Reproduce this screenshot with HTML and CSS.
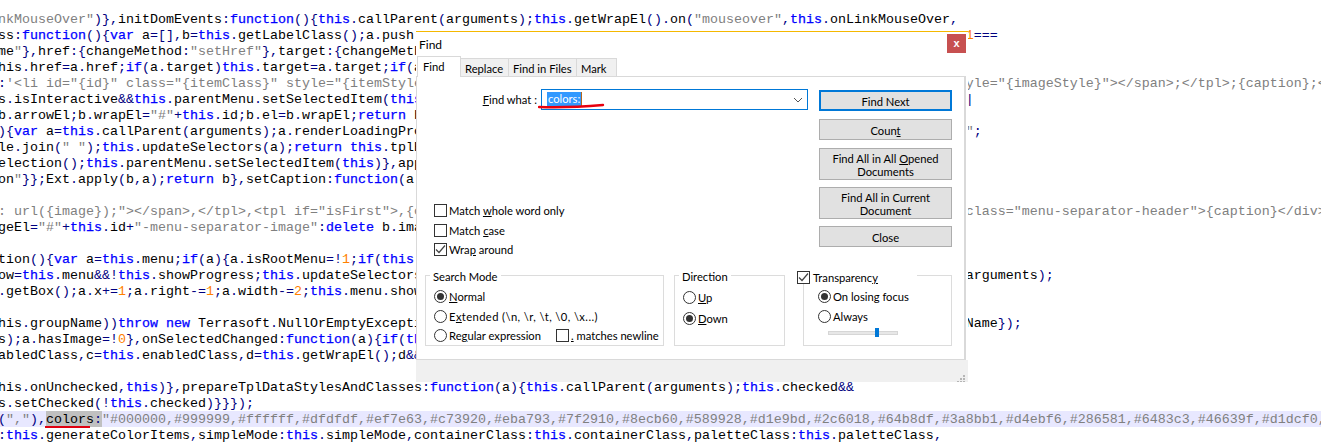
FILE: index.html
```html
<!DOCTYPE html>
<html>
<head>
	<title>Find</title>
	<link rel="stylesheet" href="styles.css">
</head>
<body>

<!-- editor behind the dialog -->
<div class="code">
<div class="line"><i class="s">nkMouseOver"</i><b class="o">)},</b>initDomEvents<b class="o">:</b><b class="k">function</b><b class="o">(){</b><b class="k">this</b><b class="o">.</b>callParent<b class="o">(</b>arguments<b class="o">);</b><b class="k">this</b><b class="o">.</b>getWrapEl<b class="o">().</b>on<b class="o">(</b><i class="s">"mouseover"</i><b class="o">,</b><b class="k">this</b><b class="o">.</b>onLinkMouseOver<b class="o">,</b></div>
<div class="line"><span class="cut">ss<b class="o">:</b><b class="k">function</b><b class="o">(){</b><b class="k">var</b> a<b class="o">=[],</b>b<b class="o">=</b><b class="k">this</b><b class="o">.</b>getLabelClass<b class="o">();</b>a<b class="o">.</b>push</span><i class="n">1</i><b class="o">===</b></div>
<div class="line">me<i class="s">"</i><b class="o">},</b>href<b class="o">:{</b>changeMethod<b class="o">:</b><i class="s">"setHref"</i><b class="o">},</b>target<b class="o">:{</b>changeMeth</div>
<div class="line">his<b class="o">.</b>href<b class="o">=</b>a<b class="o">.</b>href<b class="o">;</b><b class="k">if</b><b class="o">(</b>a<b class="o">.</b>target<b class="o">)</b><b class="k">this</b><b class="o">.</b>target<b class="o">=</b>a<b class="o">.</b>target<b class="o">;</b><b class="k">if</b><b class="o">(</b>a</div>
<div class="line"><span class="cut"><b class="o">:</b><i class="s">'&lt;li id="{id}" class="{itemClass}" style="{itemStyle</i></span><i class="s">yle="{imageStyle}"&gt;&lt;/span&gt;;&lt;/tpl&gt;;{caption};&lt;</i></div>
<div class="line"><span class="cut">s<b class="o">.</b>isInteractive<b class="o">&amp;&amp;</b><b class="k">this</b><b class="o">.</b>parentMenu<b class="o">.</b>setSelectedItem<b class="o">(</b><b class="k">this</b></span><b class="o">|</b></div>
<div class="line">b<b class="o">.</b>arrowEl<b class="o">;</b>b<b class="o">.</b>wrapEl<b class="o">=</b><i class="s">"#"</i><b class="o">+</b><b class="k">this</b><b class="o">.</b>id<b class="o">;</b>b<b class="o">.</b>el<b class="o">=</b>b<b class="o">.</b>wrapEl<b class="o">;</b><b class="k">return</b> b</div>
<div class="line"><span class="cut"><b class="o">){</b><b class="k">var</b> a<b class="o">=</b><b class="k">this</b><b class="o">.</b>callParent<b class="o">(</b>arguments<b class="o">);</b>a<b class="o">.</b>renderLoadingPro</span><i class="s">"</i><b class="o">;</b></div>
<div class="line">le<b class="o">.</b>join<b class="o">(</b><i class="s">" "</i><b class="o">);</b><b class="k">this</b><b class="o">.</b>updateSelectors<b class="o">(</b>a<b class="o">);</b><b class="k">return this</b><b class="o">.</b>tplH</div>
<div class="line">election<b class="o">();</b><b class="k">this</b><b class="o">.</b>parentMenu<b class="o">.</b>setSelectedItem<b class="o">(</b><b class="k">this</b><b class="o">)},</b>app</div>
<div class="line">on<i class="s">"</i><b class="o">}};</b>Ext<b class="o">.</b>apply<b class="o">(</b>b<b class="o">,</b>a<b class="o">);</b><b class="k">return</b> b<b class="o">},</b>setCaption<b class="o">:</b><b class="k">function</b><b class="o">(</b>a<b class="o">)</b></div>
<div class="line"></div>
<div class="line"><span class="cut"><i class="s">: url({image});"&gt;&lt;/span&gt;,&lt;/tpl&gt;,&lt;tpl if="isFirst"&gt;,{c</i></span><i class="s">class="menu-separator-header"&gt;{caption}&lt;/div&gt;</i></div>
<div class="line">geEl<b class="o">=</b><i class="s">"#"</i><b class="o">+</b><b class="k">this</b><b class="o">.</b>id<b class="o">+</b><i class="s">"-menu-separator-image"</i><b class="o">:</b><b class="k">delete</b> b<b class="o">.</b>ima</div>
<div class="line"></div>
<div class="line">tion<b class="o">(){</b><b class="k">var</b> a<b class="o">=</b><b class="k">this</b><b class="o">.</b>menu<b class="o">;</b><b class="k">if</b><b class="o">(</b>a<b class="o">){</b>a<b class="o">.</b>isRootMenu<b class="o">=!</b><i class="n">1</i><b class="o">;</b><b class="k">if</b><b class="o">(</b><b class="k">this</b></div>
<div class="line"><span class="cut">ow<b class="o">=</b><b class="k">this</b><b class="o">.</b>menu<b class="o">&amp;&amp;!</b><b class="k">this</b><b class="o">.</b>showProgress<b class="o">;</b><b class="k">this</b><b class="o">.</b>updateSelectors</span>arguments<b class="o">);</b></div>
<div class="line"><b class="o">.</b>getBox<b class="o">();</b>a<b class="o">.</b>x<b class="o">+=</b><i class="n">1</i><b class="o">;</b>a<b class="o">.</b>right<b class="o">-=</b><i class="n">1</i><b class="o">;</b>a<b class="o">.</b>width<b class="o">-=</b><i class="n">2</i><b class="o">;</b><b class="k">this</b><b class="o">.</b>menu<b class="o">.</b>show</div>
<div class="line"></div>
<div class="line"><span class="cut">his<b class="o">.</b>groupName<b class="o">))</b><b class="k">throw new</b> Terrasoft<b class="o">.</b>NullOrEmptyExcepti</span>Name<b class="o">});</b></div>
<div class="line">s<b class="o">);</b>a<b class="o">.</b>hasImage<b class="o">=!</b><i class="n">0</i><b class="o">},</b>onSelectedChanged<b class="o">:</b><b class="k">function</b><b class="o">(</b>a<b class="o">){</b><b class="k">if</b><b class="o">(</b><b class="k">th</b></div>
<div class="line">abledClass<b class="o">,</b>c<b class="o">=</b><b class="k">this</b><b class="o">.</b>enabledClass<b class="o">,</b>d<b class="o">=</b><b class="k">this</b><b class="o">.</b>getWrapEl<b class="o">();</b>d<b class="o">&amp;&amp;</b></div>
<div class="line"></div>
<div class="line">his<b class="o">.</b>onUnchecked<b class="o">,</b><b class="k">this</b><b class="o">)},</b>prepareTplDataStylesAndClasses<b class="o">:</b><b class="k">function</b><b class="o">(</b>a<b class="o">){</b><b class="k">this</b><b class="o">.</b>callParent<b class="o">(</b>arguments<b class="o">);</b><b class="k">this</b><b class="o">.</b>checked<b class="o">&amp;&amp;</b></div>
<div class="line">s<b class="o">.</b>setChecked<b class="o">(!</b><b class="k">this</b><b class="o">.</b>checked<b class="o">)}}});</b></div>
<div class="line current"><b class="o">(</b><i class="s">","</i><b class="o">),</b><span class="hit"><span class="hit-word">colors</span><b class="o">:</b></span><i class="s">"#000000,#999999,#ffffff,#dfdfdf,#ef7e63,#c73920,#eba793,#7f2910,#8ecb60,#589928,#d1e9bd,#2c6018,#64b8df,#3a8bb1,#d4ebf6,#286581,#6483c3,#46639f,#d1dcf0,</i></div>
<div class="line"><b class="o">:</b><b class="k">this</b><b class="o">.</b>generateColorItems<b class="o">,</b>simpleMode<b class="o">:</b><b class="k">this</b><b class="o">.</b>simpleMode<b class="o">,</b>containerClass<b class="o">:</b><b class="k">this</b><b class="o">.</b>containerClass<b class="o">,</b>paletteClass<b class="o">:</b><b class="k">this</b><b class="o">.</b>paletteClass<b class="o">,</b></div>
</div>

<!-- find window -->
<div class="dialog">
	<div class="titlebar">
		<span class="title">Find</span>
		<span class="close">x</span>
	</div>
	<div class="tabs">
		<span class="tab tab-active">Find</span>
		<span class="tab tab-replace">Replace</span>
		<span class="tab tab-files">Find in Files</span>
		<span class="tab tab-mark">Mark</span>
	</div>
	<div class="pane">
		<div class="pane-top">
			<div class="pane-form">
				<div class="find-row">
					<span><u>F</u>ind what :</span>
					<div class="combo">
						<span class="selected">colors:</span>
						<svg class="chevron" width="10" height="6" viewBox="0 0 10 6"><path d="M1 1 L5 5 L9 1" fill="none" stroke="#555" stroke-width="1"/></svg>
						<svg class="scribble" width="70" height="6" viewBox="0 0 70 6"><path d="M1 4 Q30 5 65 2" fill="none" stroke="#e8000e" stroke-width="2.4" stroke-linecap="round"/></svg>
					</div>
				</div>
				<div class="opts">
					<div class="opt"><span class="check"></span><span>Match <u>w</u>hole word only</span></div>
					<div class="opt"><span class="check"></span><span>Match <u>c</u>ase</span></div>
					<div class="opt opt-wrap"><span class="check"><svg width="11" height="11" viewBox="0 0 11 11"><path d="M1 5.5 L4 8.5 L10 1.5" fill="none" stroke="#444" stroke-width="1.2"/></svg></span><span>Wra<u>p</u> around</span></div>
				</div>
			</div>
			<div class="buttons">
				<div class="btn btn-default">Find Next</div>
				<div class="btn">Coun<u>t</u></div>
				<div class="btn btn-tall">Find All in All <u>O</u>pened<br>Documents</div>
				<div class="btn btn-tall">Find All in Current<br>Document</div>
				<div class="btn">Close</div>
			</div>
		</div>
		<div class="groups">
			<fieldset class="group group-mode">
				<legend>Search Mode</legend>
				<div class="opt"><span class="radio radio-on"></span><span><u>N</u>ormal</span></div>
				<div class="opt"><span class="radio"></span><span class="ext-label">E<u>x</u>tended (\n, \r, \t, \0, \x...)</span></div>
				<div class="opt opt-wrap"><span class="radio"></span><span class="regex-label">Re<u>g</u>ular expression</span><span class="check"></span><span><u>.</u> matches newline</span></div>
			</fieldset>
			<fieldset class="group group-dir">
				<legend>Direction</legend>
				<div class="opt"><span class="radio"></span><span><u>U</u>p</span></div>
				<div class="opt"><span class="radio radio-on"></span><span><u>D</u>own</span></div>
			</fieldset>
			<fieldset class="group group-trans">
				<legend><span class="check"><svg width="11" height="11" viewBox="0 0 11 11"><path d="M1 5.5 L4 8.5 L10 1.5" fill="none" stroke="#444" stroke-width="1.2"/></svg></span><span>Transparenc<u>y</u></span></legend>
				<div class="opt"><span class="radio radio-on"></span><span>On losing focus</span></div>
				<div class="opt"><span class="radio"></span><span>Always</span></div>
				<div class="slider"><span class="thumb"></span></div>
			</fieldset>
		</div>
	</div>
	<div class="statusbar">
		<svg width="9" height="7" viewBox="0 0 9 7" fill="#b5b5b5"><rect x="6" y="0" width="2" height="2"/><rect x="3" y="3" width="2" height="2"/><rect x="6" y="3" width="2" height="2"/><rect x="0" y="6" width="2" height="1"/><rect x="3" y="6" width="2" height="1"/><rect x="6" y="6" width="2" height="1"/></svg>
	</div>
</div>

</body>
</html>
```

FILE: styles.css
```css
html, body {
	margin: 0;
	height: 100%;
	overflow: hidden;
	background: #fff;
}

/* editor */
.code {
	margin-left: -2px;
	padding-top: 11px;
	font-family: "Liberation Mono", monospace;
	font-size: 13.333px;
	line-height: 18px;
	color: #000;
}
.line {
	height: 16px;
	white-space: pre;
}
.current {
	margin-left: 2px;
	background: #e8e8ff;
	text-indent: -2px;
}
.cut {
	display: inline-block;
	width: 121ch;
}
.o { color: #000080; font-weight: normal; }
.k { color: #0000ff; font-weight: normal; -webkit-text-stroke: 0.25px #0000ff; }
.s { color: #808080; font-style: normal; }
.n { color: #ff8000; font-style: normal; }
.hit {
	background: #c0c0c0;
	display: inline-block;
	height: 16px;
	text-indent: 0;
}
.hit-word {
	position: relative;
}
.hit-word::after {
	content: "";
	position: absolute;
	left: -1px;
	bottom: -1px;
	width: 45px;
	height: 2px;
	background: #e00010;
}

/* dialog */
.dialog {
	position: absolute;
	left: 416px;
	top: 31px;
	width: 552px;
	height: 351px;
	display: flex;
	flex-direction: column;
	background: #fff;
	border-top: 1px solid #f5b800;
	box-sizing: border-box;
	font-family: Lato, sans-serif;
	font-size: 11.2px;
	color: #000;
}
.titlebar {
	height: 25px;
	display: flex;
	justify-content: space-between;
	padding: 2px 2px 0 3px;
	box-sizing: border-box;
}
.title {
	font-size: 12px;
	line-height: 22px;
}
.close {
	width: 19px;
	height: 19px;
	background: #c75050;
	color: #fff;
	font-family: "Liberation Sans", sans-serif;
	font-weight: bold;
	font-size: 11px;
	line-height: 18px;
	text-align: center;
}
.tabs {
	height: 20px;
	display: flex;
	align-items: flex-end;
	padding-left: 1px;
	position: relative;
	z-index: 1;
	margin-bottom: -1px;
	white-space: nowrap;
}
.tab {
	height: 19px;
	box-sizing: border-box;
	border: 1px solid #d9d9d9;
	border-left: 0;
	background: #f0f0f0;
	line-height: 19px;
	padding-left: 4px;
}
.tab-active {
	width: 44px;
	height: 21px;
	background: #fff;
	border-left: 1px solid #d9d9d9;
	border-bottom: 0;
	padding-left: 5px;
}
.tab-replace { width: 48px; }
.tab-files { width: 68px; }
.tab-mark { width: 40px; }

.pane {
	flex: 1;
	margin-right: 2px;
	border: 1px solid #d9d9d9;
	border-right-width: 2px;
	display: flex;
	flex-direction: column;
}
.pane-top {
	height: 191px;
	display: flex;
}
.pane-form {
	width: 391px;
}
.find-row {
	margin-top: 12px;
	height: 21px;
	display: flex;
	justify-content: flex-end;
	align-items: center;
	gap: 4px;
}
.combo {
	position: relative;
	width: 267px;
	height: 21px;
	box-sizing: border-box;
	border: 1px solid #0078d7;
	padding: 2px 0 0 5px;
	line-height: 14px;
}
.selected {
	display: inline-block;
	height: 14px;
	padding: 0 1px;
	background: #3399ff;
	border-right: 1px solid #b5661c;
	color: #fff;
}
.chevron {
	position: absolute;
	right: 4px;
	top: 7px;
}
.scribble {
	position: absolute;
	left: -4px;
	top: 13px;
}
.opts {
	margin: 94px 0 0 17px;
	display: flex;
	flex-direction: column;
	gap: 7px;
}
.opt {
	display: flex;
	align-items: center;
	height: 13px;
	white-space: nowrap;
}
.opt-wrap {
	margin-top: -1px;
}
.check, .radio {
	flex: none;
	display: inline-block;
	width: 13px;
	height: 13px;
	box-sizing: border-box;
	border: 1px solid #333;
	margin-right: 2px;
	background: #fff;
}
.check svg {
	display: block;
}
.radio {
	border-radius: 50%;
	position: relative;
}
.radio-on::after {
	content: "";
	position: absolute;
	left: 2px;
	top: 2px;
	width: 7px;
	height: 7px;
	border-radius: 50%;
	background: #333;
}
.regex-label {
	width: 107px;
}
.ext-label {
	letter-spacing: 0.4px;
}

.buttons {
	margin: 13px 0 0 11px;
	width: 133px;
	display: flex;
	flex-direction: column;
	gap: 8px;
}
.btn {
	height: 21px;
	box-sizing: border-box;
	border: 1px solid #adadad;
	background: #e1e1e1;
	text-align: center;
	line-height: 21px;
}
.btn-default {
	border: 2px solid #0078d7;
	line-height: 19px;
}
.btn-tall {
	height: 32px;
	line-height: 13px;
	padding-top: 3px;
}
.btn-tall + .btn-tall, .btn-tall + .btn {
	margin-top: -1px;
}

.groups {
	display: flex;
	padding-left: 8px;
	gap: 10px;
}
.group {
	margin: 0;
	padding: 8px 0 0 8px;
	height: 78px;
	min-width: 0;
	box-sizing: border-box;
	border: 1px solid #dcdcdc;
	display: flex;
	flex-direction: column;
	gap: 7px;
}
.group legend {
	height: 14px;
	line-height: 17px;
	padding: 0 3px;
	margin-left: -4px;
}
.group-mode { width: 239px; }
.group-dir {
	width: 111px;
	padding-top: 9px;
	gap: 8px;
}
.group-trans {
	width: 149px;
	margin-left: 8px;
	padding-left: 14px;
}
.group-trans legend {
	width: 120px;
	box-sizing: border-box;
	margin-left: -21px;
	padding: 3px 0 0;
	display: flex;
	align-items: flex-start;
	line-height: 14px;
}
.group-trans legend .check {
	margin-right: 3px;
}
.slider {
	position: relative;
	width: 70px;
	height: 4px;
	margin: 1px 0 0 10px;
	box-sizing: border-box;
	background: #e7e7e7;
	border: 1px solid #d6d6d6;
}
.thumb {
	position: absolute;
	left: 46px;
	top: -4px;
	width: 4px;
	height: 9px;
	background: #0078d7;
}
.statusbar {
	height: 22px;
	background: #f0f0f0;
	display: flex;
	justify-content: flex-end;
	align-items: flex-end;
	padding-right: 2px;
}
```
